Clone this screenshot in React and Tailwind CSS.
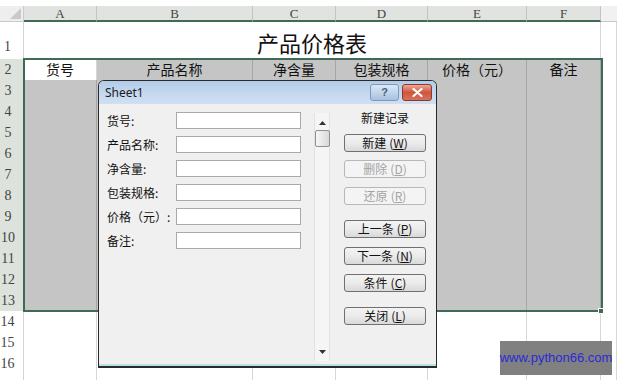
import React from "react";

const COLS = "grid grid-cols-[24px_73px_156px_83px_92px_99px_74px_16px]";
const letters = ["A", "B", "C", "D", "E", "F"];
const heads = ["货号", "产品名称", "净含量", "包装规格", "价格（元）", "备注"];
const fields = ["货号:", "产品名称:", "净含量:", "包装规格:", "价格（元）:", "备注:"];

const serif = { fontFamily: '"Liberation Serif", "DejaVu Serif", serif' };
const cjk = { fontFamily: '"Noto Sans CJK SC", "Noto Sans", sans-serif' };

const RowHead = ({ n, sel }) => (
  <div
    style={serif}
    className={
      sel
        ? "flex items-center pr-[8px] justify-center text-[14px] text-[#444] bg-[#dde2dd] border-b border-[#c3c8c3]"
        : "flex items-center pr-[8px] justify-center text-[14px] text-[#444] bg-white border-b border-r border-[#d4d4d4]"
    }
  >
    {n}
  </div>
);

const GreyCell = ({ children }) => (
  <div style={cjk} className="flex items-center justify-center bg-[#c5c5c5] border-r border-b border-[#a6a6a6] text-[14px] text-[#111]">
    {children}
  </div>
);

const WhiteCell = ({ children }) => (
  <div style={cjk} className="flex items-center justify-center bg-white border-r border-b border-[#d6d6d6] text-[14px] text-[#111]">
    {children}
  </div>
);

const Btn = ({ label, k, off, mt }) => (
  <div
    style={cjk}
    className={
      (off
        ? "border-[#b5b9bc] text-[#a3a3a3] bg-[#f4f4f4] "
        : "border-[#707070] text-[#111] bg-linear-to-b from-[#f3f3f3] via-[#ebebeb] to-[#d9d9d9] ") +
      mt +
      " h-[18px] w-[82px] rounded-[3px] border flex items-center justify-center text-[12px] leading-none"
    }
  >
    {label}
    <span className="ml-[3px]">
      (<span className="underline">{k}</span>)
    </span>
  </div>
);

const Dialog = () => (
  <div className="absolute left-[98px] top-[80px] w-[339px] h-[288px] border border-[#2a2a2a] border-b-2 rounded-t-[6px] bg-[#f0f0f0] flex flex-col overflow-hidden shadow-[inset_0_-2px_0_#b6e3ea]">
    <div className="h-[23px] shrink-0 bg-linear-to-b from-[#b3cbe8] via-[#c3d7ef] to-[#cfe0f3] flex items-start justify-between pl-[6px] pr-[4px]">
      <span style={{ fontFamily: '"Noto Sans", "Liberation Sans", sans-serif' }} className="text-[12px] text-[#1a1a1a] mt-[3px]">
        Sheet1
      </span>
      <div className="flex gap-[3px] mt-[3px]">
        <div className="w-[29px] h-[17px] rounded-[3px] border border-[#7f99b9] bg-linear-to-b from-[#dbe8f6] to-[#a7c2e2] flex items-center justify-center text-[11px] font-bold text-[#4d5d70]" style={{ fontFamily: '"Liberation Sans", sans-serif' }}>
          ?
        </div>
        <div className="w-[30px] h-[17px] rounded-[3px] border border-[#8c3a2c] bg-linear-to-b from-[#e9a898] via-[#cf553d] to-[#d6735f] flex items-center justify-center">
          <svg width="11" height="9" viewBox="0 0 11 9">
            <path d="M1.5 1 L9.5 8 M9.5 1 L1.5 8" stroke="#fff" strokeWidth="2.2" strokeLinecap="round" />
          </svg>
        </div>
      </div>
    </div>
    <div className="flex flex-1">
      <div className="flex flex-col gap-[7px] pt-[8px] pl-[8px]">
        {fields.map((f) => (
          <div key={f} className="flex h-[17px] items-center">
            <span style={cjk} className="w-[69px] text-[12px] text-[#111] leading-none">
              {f}
            </span>
            <div className="w-[125px] h-[17px] bg-white border border-[#a9a9a9]" />
          </div>
        ))}
      </div>
      <div className="ml-[13px] mt-[9px] mb-[5px] w-[16px] border-l border-r border-[#e2e2e2] bg-[#f5f5f5] flex flex-col items-center">
        <svg width="7" height="4" viewBox="0 0 7 4" className="mt-[8px]">
          <path d="M0 4 L3.5 0 L7 4 Z" fill="#333" />
        </svg>
        <div className="mt-[5px] w-[15px] h-[17px] border border-[#8f8f8f] rounded-[2px] bg-linear-to-r from-[#f7f7f7] to-[#d8d8d8]" />
        <div className="flex-1" />
        <svg width="7" height="4" viewBox="0 0 7 4" className="mb-[7px]">
          <path d="M0 0 L7 0 L3.5 4 Z" fill="#333" />
        </svg>
      </div>
      <div className="ml-[14px] pt-[6px] flex flex-col items-center">
        <div style={cjk} className="h-[16px] text-[12px] text-[#111] leading-[16px]">
          新建记录
        </div>
        <Btn label="新建" k="W" mt="mt-[8px]" />
        <Btn label="删除" k="D" off mt="mt-[8px]" />
        <Btn label="还原" k="R" off mt="mt-[9px]" />
        <Btn label="上一条" k="P" mt="mt-[15px]" />
        <Btn label="下一条" k="N" mt="mt-[9px]" />
        <Btn label="条件" k="C" mt="mt-[9px]" />
        <Btn label="关闭" k="L" mt="mt-[15px]" />
      </div>
    </div>
  </div>
);

export default function App() {
  const rows = [];
  for (let n = 3; n <= 17; n++) rows.push(n);

  return (
    <div className="relative w-[617px] h-[380px] overflow-hidden bg-white">
      <div className="h-[6px]" />
      <div className={COLS + " h-[16px]"}>
        <div className="relative bg-[#eeeeee] border-r border-b border-[#c9c9c9]">
          <svg width="11" height="11" viewBox="0 0 11 11" className="absolute right-[2px] bottom-[2px]">
            <path d="M11 0 L11 11 L0 11 Z" fill="#c9c9c9" />
          </svg>
        </div>
        {letters.map((l) => (
          <div key={l} style={serif} className="flex items-center justify-center bg-[#e0e3e0] border-r border-[#c2c6c2] border-b-2 border-b-[#3f6a54] text-[13px] text-[#444] leading-none">
            {l}
          </div>
        ))}
        <div className="bg-[#f1f1f1] border-b border-[#c9c9c9]" />
      </div>
      <div className={COLS + " h-[37px]"}>
        <div style={serif} className="flex items-end justify-center pr-[8px] pb-[2px] text-[14px] text-[#444] bg-white border-r border-b border-[#d4d4d4]">
          1
        </div>
        <div style={cjk} className="col-span-6 flex items-center justify-center bg-white border-r border-b border-[#d6d6d6] text-[22px] text-[#111] pt-[4px]">
          产品价格表
        </div>
        <WhiteCell />
      </div>
      <div className={COLS + " h-[21px]"}>
        <RowHead n={2} sel />
        <WhiteCell>{heads[0]}</WhiteCell>
        {heads.slice(1).map((h) => (
          <GreyCell key={h}>{h}</GreyCell>
        ))}
        <WhiteCell />
      </div>
      {rows.map((n) => (
        <div key={n} className={COLS + " h-[21px]"}>
          <RowHead n={n <= 16 ? n : ""} sel={n <= 13} />
          {letters.map((l) =>
            n <= 13 ? <GreyCell key={l} /> : <WhiteCell key={l} />
          )}
          <WhiteCell />
        </div>
      ))}

      <div className="absolute left-[23px] top-[58px] w-[580px] h-[254px] border-2 border-[#3f6a54] pointer-events-none" />
      <div className="absolute left-[598px] top-[308px] w-[6px] h-[6px] bg-[#3f6a54] border border-white" />

      <Dialog />

      <div className="absolute left-[500px] top-[341px] w-[112px] h-[34px] bg-[#808080] flex items-center justify-center">
        <span style={{ fontFamily: '"Liberation Sans", Arial, sans-serif' }} className="text-[13px] text-[#2a2ad8]">
          www.python66.com
        </span>
      </div>
    </div>
  );
}
